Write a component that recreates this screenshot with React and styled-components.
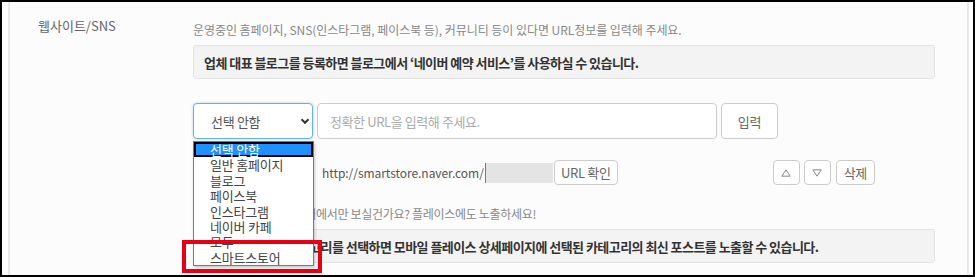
import React from "react";
import styled, { createGlobalStyle } from "styled-components";

const Global = createGlobalStyle`
  html, body { margin: 0; padding: 0; background: #fff; }
  body { font-family: "Noto Sans CJK KR", "Noto Sans", sans-serif; }
  * { box-sizing: border-box; }
`;

const Frame = styled.div`
  width: 975px;
  height: 277px;
  border: 2px solid #000;
  background: #fff;
  padding-left: 6px;
  overflow: hidden;
  display: flex;
`;

const Panel = styled.div`
  width: 961px;
  height: 100%;
  background: #fcfcfc;
  border-left: 2px solid #e9e9e9;
  border-right: 2px solid #e9e9e9;
  display: flex;
  padding-top: 15px;
`;

const Label = styled.div`
  width: 183px;
  padding-left: 28px;
  font-size: 13px;
  line-height: 18px;
  color: #666;
  letter-spacing: 0;
  flex-shrink: 0;
`;

const Content = styled.div`
  width: 742px;
  display: flex;
  flex-direction: column;
  padding-top: 4px;
`;

const Desc = styled.div`
  font-size: 12px;
  line-height: 18px;
  color: #888;
  letter-spacing: -0.05px;
  white-space: nowrap;
`;

const Notice = styled.div`
  height: 34px;
  margin-top: ${(p) => p.$mt}px;
  background: #f3f3f3;
  border: 1px solid #e3e3e3;
  border-radius: 3px;
  padding-left: 10px;
  display: flex;
  align-items: center;
  font-size: 13px;
  font-weight: 700;
  color: #333;
  letter-spacing: -0.55px;
  white-space: nowrap;
`;

const InputRow = styled.div`
  display: flex;
  gap: 4px;
  margin-top: 24px;
  height: 36px;
`;

const SelectWrap = styled.div`
  position: relative;
  width: 120px;
  height: 100%;
  flex-shrink: 0;
`;

const SelectBox = styled.div`
  height: 100%;
  border: 1px solid ${(p) => (p.$focus ? "#66afe9" : "#ccc")};
  box-shadow: ${(p) => (p.$focus ? "0 0 3px rgba(102,175,233,0.5)" : "none")};
  border-radius: 4px;
  background: #fff;
  display: flex;
  align-items: center;
  justify-content: space-between;
  padding: 0 2px 0 17px;
  font-size: 13px;
  color: #555;
  letter-spacing: -0.3px;
`;

const TextInput = styled.div`
  width: 400px;
  border: 1px solid #ccc;
  border-radius: 4px;
  background: #fff;
  display: flex;
  align-items: center;
  padding-left: 12px;
  font-size: 13px;
  color: #aaa;
  letter-spacing: -0.4px;
`;

const Btn = styled.div`
  width: ${(p) => p.$w}px;
  height: 100%;
  margin-left: ${(p) => p.$ml || 0}px;
  border: 1px solid #ccc;
  border-radius: 4px;
  background: #fff;
  display: flex;
  align-items: center;
  justify-content: center;
  font-size: 13px;
  color: #666;
  letter-spacing: -0.3px;
  flex-shrink: 0;
`;

const ItemRow = styled.div`
  display: flex;
  align-items: center;
  height: 25px;
  margin-top: 21px;
`;

const Prefix = styled.div`
  margin-left: 9px;
  font-size: 12px;
  color: #555;
  letter-spacing: -0.05px;
  white-space: nowrap;
`;

const Masked = styled.div`
  width: 68px;
  height: 20px;
  margin-left: 1px;
  background: #e4e4e4;
  border-left: 1px solid #777;
`;

const Hint = styled.div`
  margin-top: 20px;
  font-size: 12px;
  line-height: 18px;
  color: #888;
  letter-spacing: -0.3px;
  white-space: nowrap;
`;

const Dropdown = styled.div`
  position: absolute;
  top: 38px;
  left: 0;
  width: 121px;
  height: 125px;
  background: #fff;
  border: 1px solid #7a7a7a;
  box-shadow: 1px 2px 3px rgba(0, 0, 0, 0.2);
  z-index: 5;
`;

const Option = styled.div`
  height: 15.4px;
  line-height: 15px;
  padding-left: 16px;
  font-size: 13px;
  letter-spacing: -0.2px;
  color: ${(p) => (p.$active ? "#fff" : "#444")};
  background: ${(p) => (p.$active ? "#1e90ff" : "transparent")};
  box-shadow: ${(p) => (p.$active ? "inset 0 0 0 2px #000" : "none")};
  white-space: nowrap;
`;

const Highlight = styled.div`
  position: absolute;
  left: -11px;
  top: 137px;
  width: 140px;
  height: 33px;
  border: 4px solid #e60012;
  z-index: 6;
`;

const Chevron = () => (
  <svg width="10" height="7" viewBox="0 0 10 7">
    <path d="M1.5 1.3 L5 4.8 L8.5 1.3" fill="none" stroke="#333" strokeWidth="2" />
  </svg>
);

const options = [
  "선택 안함",
  "일반 홈페이지",
  "블로그",
  "페이스북",
  "인스타그램",
  "네이버 카페",
  "모두",
  "스마트스토어",
];

export default function App() {
  return (
    <>
      <Global />
      <Frame>
        <Panel>
          <Label>웹사이트/SNS</Label>
          <Content>
            <Desc>
              운영중인 홈페이지, SNS(인스타그램, 페이스북 등), 커뮤니티 등이 있다면 URL정보를 입력해 주세요.
            </Desc>
            <Notice $mt={6}>
              업체 대표 블로그를 등록하면 블로그에서 ‘네이버 예약 서비스’를 사용하실 수 있습니다.
            </Notice>
            <InputRow>
              <SelectWrap>
                <SelectBox $focus>
                  <span>선택 안함</span>
                  <Chevron />
                </SelectBox>
                <Dropdown>
                  {options.map((o, i) => (
                    <Option key={o} $active={i === 0}>
                      {o}
                    </Option>
                  ))}
                </Dropdown>
                <Highlight />
              </SelectWrap>
              <TextInput>정확한 URL을 입력해 주세요.</TextInput>
              <Btn $w={57}>입력</Btn>
            </InputRow>
            <ItemRow>
              <SelectWrap>
                <SelectBox>
                  <span>스마트스토어</span>
                  <Chevron />
                </SelectBox>
              </SelectWrap>
              <Prefix>http://smartstore.naver.com/</Prefix>
              <Masked />
              <Btn $w={64} $ml={1}>URL 확인</Btn>
              <Btn $w={27} $ml={155}>
                <svg width="10" height="8" viewBox="0 0 10 8">
                  <path d="M5 0.8 L9.2 7.2 L0.8 7.2 Z" fill="none" stroke="#888" strokeWidth="1" />
                </svg>
              </Btn>
              <Btn $w={27} $ml={4}>
                <svg width="10" height="8" viewBox="0 0 10 8">
                  <path d="M0.8 0.8 L9.2 0.8 L5 7.2 Z" fill="none" stroke="#888" strokeWidth="1" />
                </svg>
              </Btn>
              <Btn $w={39} $ml={5}>삭제</Btn>
            </ItemRow>
            <Hint>우리 상품을 스마트스토어에서만 보실건가요? 플레이스에도 노출하세요!</Hint>
            <Notice $mt={6}>
              스마트스토어의 카테고리를 선택하면 모바일 플레이스 상세페이지에 선택된 카테고리의 최신 포스트를 노출할 수 있습니다.
            </Notice>
          </Content>
        </Panel>
      </Frame>
    </>
  );
}
